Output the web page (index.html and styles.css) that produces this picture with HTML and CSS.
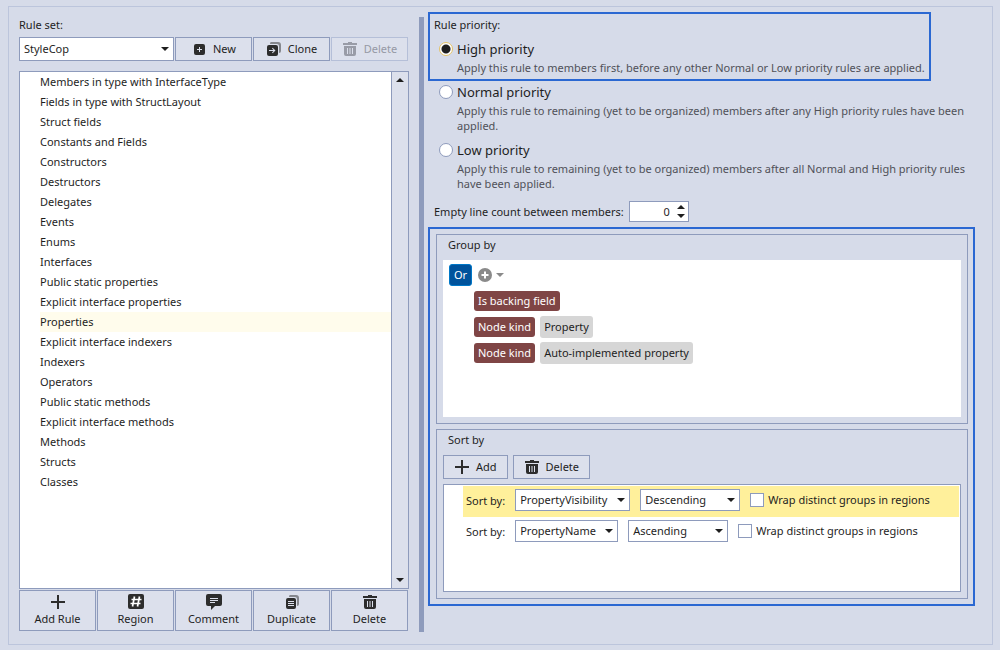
FILE: index.html
```html
<!DOCTYPE html>
<html lang="en">
<head>
<meta charset="utf-8">
<title>Rule options</title>
<link rel="stylesheet" href="styles.css">
</head>
<body>
<svg class="defs" aria-hidden="true">
  <symbol id="caret" viewBox="0 0 8 4"><path d="M0 0h8L4 4z"/></symbol>
  <symbol id="caret-up" viewBox="0 0 8 4"><path d="M0 4h8L4 0z"/></symbol>
  <symbol id="plus" viewBox="0 0 16 16"><path d="M7 1h2v6h6v2H9v6H7V9H1V7h6z"/></symbol>
  <symbol id="trash" viewBox="0 0 16 16"><path d="M6 1h4v1h5v2H1V2h5z"/><path fill-rule="evenodd" d="M2 5h12v8q0 2-2 2H4q-2 0-2-2zM5 7v6h1V7zM7.500 7v6h1V7zM10 7v6h1V7z"/></symbol>
  <symbol id="new" viewBox="0 0 16 16"><path fill-rule="evenodd" d="M5 3h7q2 0 2 2v7q0 2-2 2H5q-2 0-2-2V5q0-2 2-2zM8 6v2H6v1h2v2h1V9h2V8H9V6z"/></symbol>
  <symbol id="clone" viewBox="0 0 16 16"><path opacity=".5" d="M5 1h7q3 0 3 3v6q0 2-2 2V5q0-2-2-2H4q0-2 1-2z"/><path fill-rule="evenodd" d="M3 4h7q2 0 2 2v7q0 2-2 2H3q-2 0-2-2V6q0-2 2-2zM3 9v1h4.500L6 11.500l.7.700L9.500 9.500 6.700 6.800 6 7.500 7.500 9z"/></symbol>
  <symbol id="duplicate" viewBox="0 0 16 16"><path opacity=".5" d="M6 1h6q3 0 3 3v6q0 2-2 2V5q0-2-2-2H5q0-2 1-2z"/><path fill-rule="evenodd" d="M4 4h6q2 0 2 2v7q0 2-2 2H4q-2 0-2-2V6q0-2 2-2zM4 7v1h6V7zM4 9v1h6V9zM4 11v1h6v-1z"/></symbol>
  <symbol id="region" viewBox="0 0 16 16"><rect width="16" height="15" rx="2"/><path d="M6.500 2.500l-2 10M11.500 2.500l-2 10M3.500 5.500h10M2.500 9.500h10" stroke="#fff" stroke-width="1.700" fill="none"/></symbol>
  <symbol id="comment" viewBox="0 0 16 16"><path fill-rule="evenodd" d="M2 0h12q2 0 2 2v8q0 2-2 2H9l-4 4v-4H2q-2 0-2-2V2q0-2 2-2zM4 4v1h8V4zM4 6v1h8V6zM4 8v1h5V8z"/></symbol>
  <symbol id="add-round" viewBox="0 0 14 14"><circle cx="7" cy="7" r="7"/><path d="M7 3.500v7M3.500 7h7" stroke="#fff" stroke-width="2"/></symbol>
</svg>
<main class="frame">
  <section class="rules">
    <label class="rules-label" for="rule-set">Rule set:</label>
    <div class="tiles">
      <span class="combo combo-wide"><select id="rule-set"><option>StyleCop</option></select><svg class="caret"><use href="#caret"/></svg></span>
      <button class="btn"><svg class="icon"><use href="#new"/></svg>New</button>
      <button class="btn"><svg class="icon"><use href="#clone"/></svg>Clone</button>
      <button class="btn" disabled><svg class="icon"><use href="#trash"/></svg>Delete</button>
    </div>
    <div class="list-box">
      <ul class="list">
        <li>Members in type with InterfaceType</li>
        <li>Fields in type with StructLayout</li>
        <li>Struct fields</li>
        <li>Constants and Fields</li>
        <li>Constructors</li>
        <li>Destructors</li>
        <li>Delegates</li>
        <li>Events</li>
        <li>Enums</li>
        <li>Interfaces</li>
        <li>Public static properties</li>
        <li>Explicit interface properties</li>
        <li class="selected">Properties</li>
        <li>Explicit interface indexers</li>
        <li>Indexers</li>
        <li>Operators</li>
        <li>Public static methods</li>
        <li>Explicit interface methods</li>
        <li>Methods</li>
        <li>Structs</li>
        <li>Classes</li>
      </ul>
      <div class="scrollbar">
        <button aria-label="Scroll up"><svg class="caret"><use href="#caret-up"/></svg></button>
        <button aria-label="Scroll down"><svg class="caret"><use href="#caret"/></svg></button>
      </div>
    </div>
    <div class="tiles">
      <button class="btn btn-tall"><svg class="icon"><use href="#plus"/></svg>Add Rule</button>
      <button class="btn btn-tall"><svg class="icon"><use href="#region"/></svg>Region</button>
      <button class="btn btn-tall"><svg class="icon"><use href="#comment"/></svg>Comment</button>
      <button class="btn btn-tall"><svg class="icon"><use href="#duplicate"/></svg>Duplicate</button>
      <button class="btn btn-tall"><svg class="icon"><use href="#trash"/></svg>Delete</button>
    </div>
  </section>
  <div class="splitter"></div>
  <section class="details">
    <div class="marked priority-mark">
      <div class="priority-label">Rule priority:</div>
      <div class="priority">
        <input type="radio" name="priority" id="high" checked>
        <label for="high">High priority</label>
        <p>Apply this rule to members first, before any other Normal or Low priority rules are applied.</p>
      </div>
    </div>
    <div class="priorities">
      <div class="priority">
        <input type="radio" name="priority" id="normal">
        <label for="normal">Normal priority</label>
        <p>Apply this rule to remaining (yet to be organized) members after any High priority rules have been applied.</p>
      </div>
      <div class="priority">
        <input type="radio" name="priority" id="low">
        <label for="low">Low priority</label>
        <p>Apply this rule to remaining (yet to be organized) members after all Normal and High priority rules have been applied.</p>
      </div>
    </div>
    <div class="count">
      <label for="lines">Empty line count between members:</label>
      <span class="spin">
        <input id="lines" type="text" inputmode="numeric" value="0">
        <span class="spin-keys">
          <button aria-label="More"><svg class="caret"><use href="#caret-up"/></svg></button>
          <button aria-label="Fewer"><svg class="caret"><use href="#caret"/></svg></button>
        </span>
      </span>
    </div>
    <div class="marked groups">
      <section class="group group-by">
        <h2>Group by</h2>
        <div class="tree">
          <div class="tree-root">
            <button class="or">Or</button>
            <button class="add-node" aria-label="Add condition"><svg class="add-icon"><use href="#add-round"/></svg><svg class="caret"><use href="#caret"/></svg></button>
          </div>
          <div class="tree-row"><span class="chip kind">Is backing field</span></div>
          <div class="tree-row"><span class="chip kind">Node kind</span><span class="chip value">Property</span></div>
          <div class="tree-row"><span class="chip kind">Node kind</span><span class="chip value">Auto-implemented property</span></div>
        </div>
      </section>
      <section class="group sort-by">
        <h2>Sort by</h2>
        <div class="toolbar">
          <button class="btn"><svg class="icon"><use href="#plus"/></svg>Add</button>
          <button class="btn"><svg class="icon"><use href="#trash"/></svg>Delete</button>
        </div>
        <div class="sorts">
          <div class="sort-row current">
            <label class="sort-label" for="key1">Sort by:</label>
            <span class="combo key-visibility"><select id="key1"><option>PropertyVisibility</option></select><svg class="caret"><use href="#caret"/></svg></span>
            <span class="combo direction"><select aria-label="Direction"><option>Descending</option></select><svg class="caret"><use href="#caret"/></svg></span>
            <label class="check"><input type="checkbox">Wrap distinct groups in regions</label>
          </div>
          <div class="sort-row">
            <label class="sort-label" for="key2">Sort by:</label>
            <span class="combo key-name"><select id="key2"><option>PropertyName</option></select><svg class="caret"><use href="#caret"/></svg></span>
            <span class="combo direction"><select aria-label="Direction"><option>Ascending</option></select><svg class="caret"><use href="#caret"/></svg></span>
            <label class="check"><input type="checkbox">Wrap distinct groups in regions</label>
          </div>
        </div>
      </section>
    </div>
  </section>
</main>
</body>
</html>
```
FILE: styles.css
```css
* { box-sizing: border-box; }

body {
  margin: 0;
  min-height: 100vh;
  padding: 6px 7px 5px 8px;
  display: flex;
  background: #d6dbe9;
  color: #1e1e1e;
  font: 11px/20px "Noto Sans", "Open Sans", sans-serif;
}

button, input, select { font: inherit; color: inherit; margin: 0; padding: 0; border: 0; background: none; }
h2, p, ul { margin: 0; padding: 0; font: inherit; list-style: none; }
svg { display: block; flex: none; fill: currentColor; }
.defs { position: absolute; width: 0; height: 0; }
.caret { width: 8px; height: 4px; }
.icon { width: 16px; height: 16px; color: #2d2d2d; }

.frame {
  flex: 1;
  display: flex;
  gap: 10px;
  border: 1px solid #bcc5dc;
  padding: 5px 17px 12px 10px;
}

.rules { flex: 0 0 390px; display: flex; flex-direction: column; padding: 3px 0 1px; }
.rules-label { height: 22px; }
.tiles { display: grid; grid-template-columns: repeat(5, 1fr); gap: 1px; padding-right: 1px; }
.combo-wide { grid-column: span 2; }

.btn {
  display: flex;
  align-items: center;
  justify-content: center;
  gap: 6px;
  height: 24px;
  border: 1px solid #8e9bbc;
  background: #dce0ec;
}
.btn:disabled { border-color: #b5bfd8; color: #9699a5; }
.btn:disabled .icon { color: #999ca7; }
.btn-tall { flex-direction: column; gap: 0; height: 41px; line-height: 18px; padding-top: 1px; }

.combo { position: relative; display: flex; height: 22px; border: 1px solid #8e9bbc; background: #fff; }
.combo.combo-wide { height: 24px; }
.combo select { appearance: none; flex: 1; min-width: 0; padding: 0 14px 0 4px; }
.combo .caret { position: absolute; right: 4px; top: 50%; margin-top: -2px; pointer-events: none; }

.list-box { flex: 1; display: flex; margin: 10px 0 1px; border: 1px solid #8e9bbc; background: #fff; }
.list { flex: 1; padding-left: 20px; }
.list .selected { background: #fffcec; }
.scrollbar {
  width: 17px;
  display: flex;
  flex-direction: column;
  justify-content: space-between;
  border-left: 1px solid #8e9bbc;
  background: #dce0ec;
}
.scrollbar button { height: 16px; display: grid; place-items: center; }

.splitter { width: 5px; margin-top: 5px; background: #8e9bbc; }

.details { flex: 1; min-width: 0; display: flex; flex-direction: column; margin-left: -6px; }
.marked { border: 2px solid #2b68d2; }
.priority-mark { align-self: flex-start; padding: 1px 4px 4px; }
.priority-label { height: 24px; }
.priority { display: grid; grid-template-columns: 14px 1fr; column-gap: 4px; padding-left: 5px; align-items: center; }
.priority label { font-size: 13px; line-height: 20px; }
.priority p { grid-column: 2; line-height: 15px; padding-top: 1px; color: #505158; }
.priority input {
  appearance: none;
  width: 14px;
  height: 14px;
  border: 1px solid #8e9bbc;
  border-radius: 50%;
  background: #fff;
}
.priority input:checked { border-color: #e5c365; background: radial-gradient(circle, #1e1e1e 4px, #fff 5px); }
.priorities { display: flex; flex-direction: column; gap: 7px; padding: 1px 0 0 6px; }

.count { display: flex; align-items: center; gap: 5px; padding: 10px 0 5px 6px; }
.spin { display: flex; width: 60px; height: 21px; border: 1px solid #8e9bbc; background: #fff; }
.spin input { flex: 1; min-width: 0; text-align: right; }
.spin-keys { width: 18px; display: grid; padding-left: 4px; }
.spin-keys button { display: grid; place-items: center; justify-content: center; }

.groups { flex: none; display: flex; flex-direction: column; gap: 5px; padding: 5px 5px 5px 6px; }
.group { border: 1px solid #8e9bbc; padding: 0 6px 6px; }
.group h2 { padding-left: 5px; height: 20px; }
.tree { margin-top: 5px; height: 157px; padding: 4px 6px; background: #fff; }
.tree-root { display: flex; gap: 6px; align-items: center; }
.or { width: 23px; height: 22px; border: 1px solid #0078c8; border-radius: 3px; background: #00539c; color: #fff; line-height: 20px; }
.add-node { display: flex; align-items: center; gap: 4px; color: #8a8a8a; }
.add-icon { width: 14px; height: 14px; }
.tree-row { display: flex; align-items: center; gap: 5px; height: 22px; margin: 4px 0 0 25px; }
.chip { border-radius: 3px; padding: 0 4px; }
.kind { background: #7f4545; color: #fff; }
.value { background: #d6d6d6; line-height: 22px; }

.toolbar { display: flex; gap: 5px; margin: 5px 0; }
.toolbar .btn { padding: 0 10px; }
.sorts { height: 108px; border: 1px solid #8e9bbc; background: #fff; padding: 1px 1px 1px 19px; }
.sort-row { display: flex; align-items: center; gap: 10px; height: 31px; padding: 0 0 3px 3px; }
.sort-row.current { background: #fff09b; }
.sort-label { padding-top: 2px; }
.key-visibility { width: 115px; }
.key-name { width: 103px; }
.direction { width: 100px; }
.check { display: flex; align-items: center; gap: 4px; }
.check input { appearance: none; width: 14px; height: 14px; border: 1px solid #8e9bbc; background: #fff; }
```
